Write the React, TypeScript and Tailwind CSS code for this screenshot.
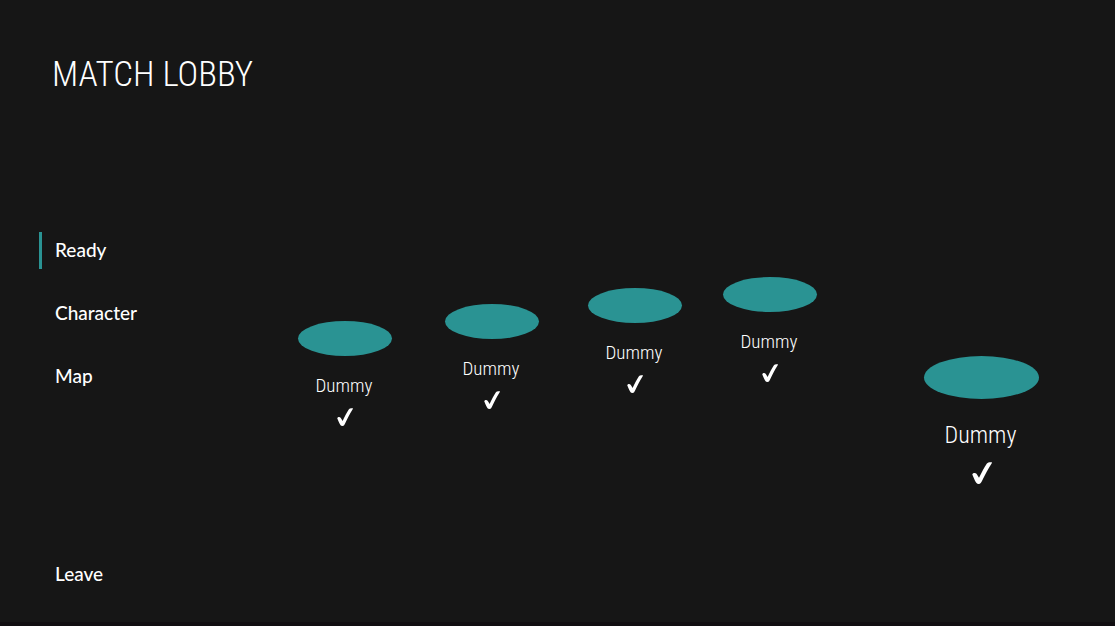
const players = [
  { id: 1, place: "mt-[321px]" },
  { id: 2, place: "mt-[304px] ml-[53px]" },
  { id: 3, place: "mt-[288px] ml-[49px]" },
  { id: 4, place: "mt-[277px] ml-[41px]" },
];

const menu = [
  { label: "Ready", active: true },
  { label: "Character", active: false },
  { label: "Map", active: false },
];

function Check({ className }: { className: string }) {
  return (
    <svg viewBox="0 0 20 22" preserveAspectRatio="none" className={className} role="img" aria-label="Ready">
      <path
        d="M0.3 12.4C1 10.9 3.2 10.5 4.5 11.8C5.5 13 6 14.3 7 15.8C9.6 10.6 12 5.8 14.9 1.5C15.9 0.3 17.2 0.1 19.9 0.2C20 0.7 19.9 1 19.6 1.4C16.3 6.6 13.1 12.6 10.1 18.8C9.2 20.8 8.4 21.9 6.8 21.9C4.9 22 4 20.7 3 18.7C2.2 16.7 1.2 14.8 0.3 12.4Z"
        fill="currentColor"
      />
    </svg>
  );
}

function Player({ large = false, place }: { large?: boolean; place: string }) {
  return (
    <article className={`flex shrink-0 flex-col items-center ${large ? "w-[115px]" : "w-[94px]"} ${place}`}>
      <div className={`w-full rounded-[50%] bg-[#2a9393] ${large ? "h-[43px]" : "h-[35px]"}`} />
      <p
        className={`pr-[2px] font-['Roboto_Condensed','Liberation_Sans_Narrow','Roboto',sans-serif] font-light ${
          large ? "mt-5 text-[24px] leading-8" : "mt-[18px] text-[19px] leading-6"
        }`}
      >
        Dummy
      </p>
      <Check className={large ? "mt-[11px] h-[22px] w-5" : "mt-[10px] h-[18px] w-4"} />
    </article>
  );
}

export default function App() {
  return (
    <div className="flex min-h-screen flex-col border-b-4 border-[#110e11] bg-[#161616] font-['Lato',sans-serif] text-white">
      <div className="flex grow">
        <aside className="flex w-[298px] shrink-0 flex-col pl-[39px]">
          <h1 className="mt-[51px] pl-[13px] font-['Roboto_Condensed','Liberation_Sans_Narrow','Roboto',sans-serif] text-[35px] leading-[48px] font-light whitespace-nowrap">
            MATCH LOBBY
          </h1>
          <nav className="mt-[133px] flex flex-col items-start gap-[26px]">
            {menu.map((item) => (
              <button
                key={item.label}
                className={`h-[37px] border-l-[3px] pb-px pl-[13px] text-[19px] leading-6 font-medium ${
                  item.active ? "border-[#2a9393]" : "border-transparent"
                }`}
              >
                {item.label}
              </button>
            ))}
          </nav>
          <button className="mt-auto mb-[29px] h-[37px] self-start border-l-[3px] border-transparent pb-px pl-[13px] text-[19px] leading-6 font-medium">
            Leave
          </button>
        </aside>
        <main className="flex grow items-start">
          {players.map((player) => (
            <Player key={player.id} place={player.place} />
          ))}
          <Player large place="mt-[356px] mr-[76px] ml-auto" />
        </main>
      </div>
    </div>
  );
}
